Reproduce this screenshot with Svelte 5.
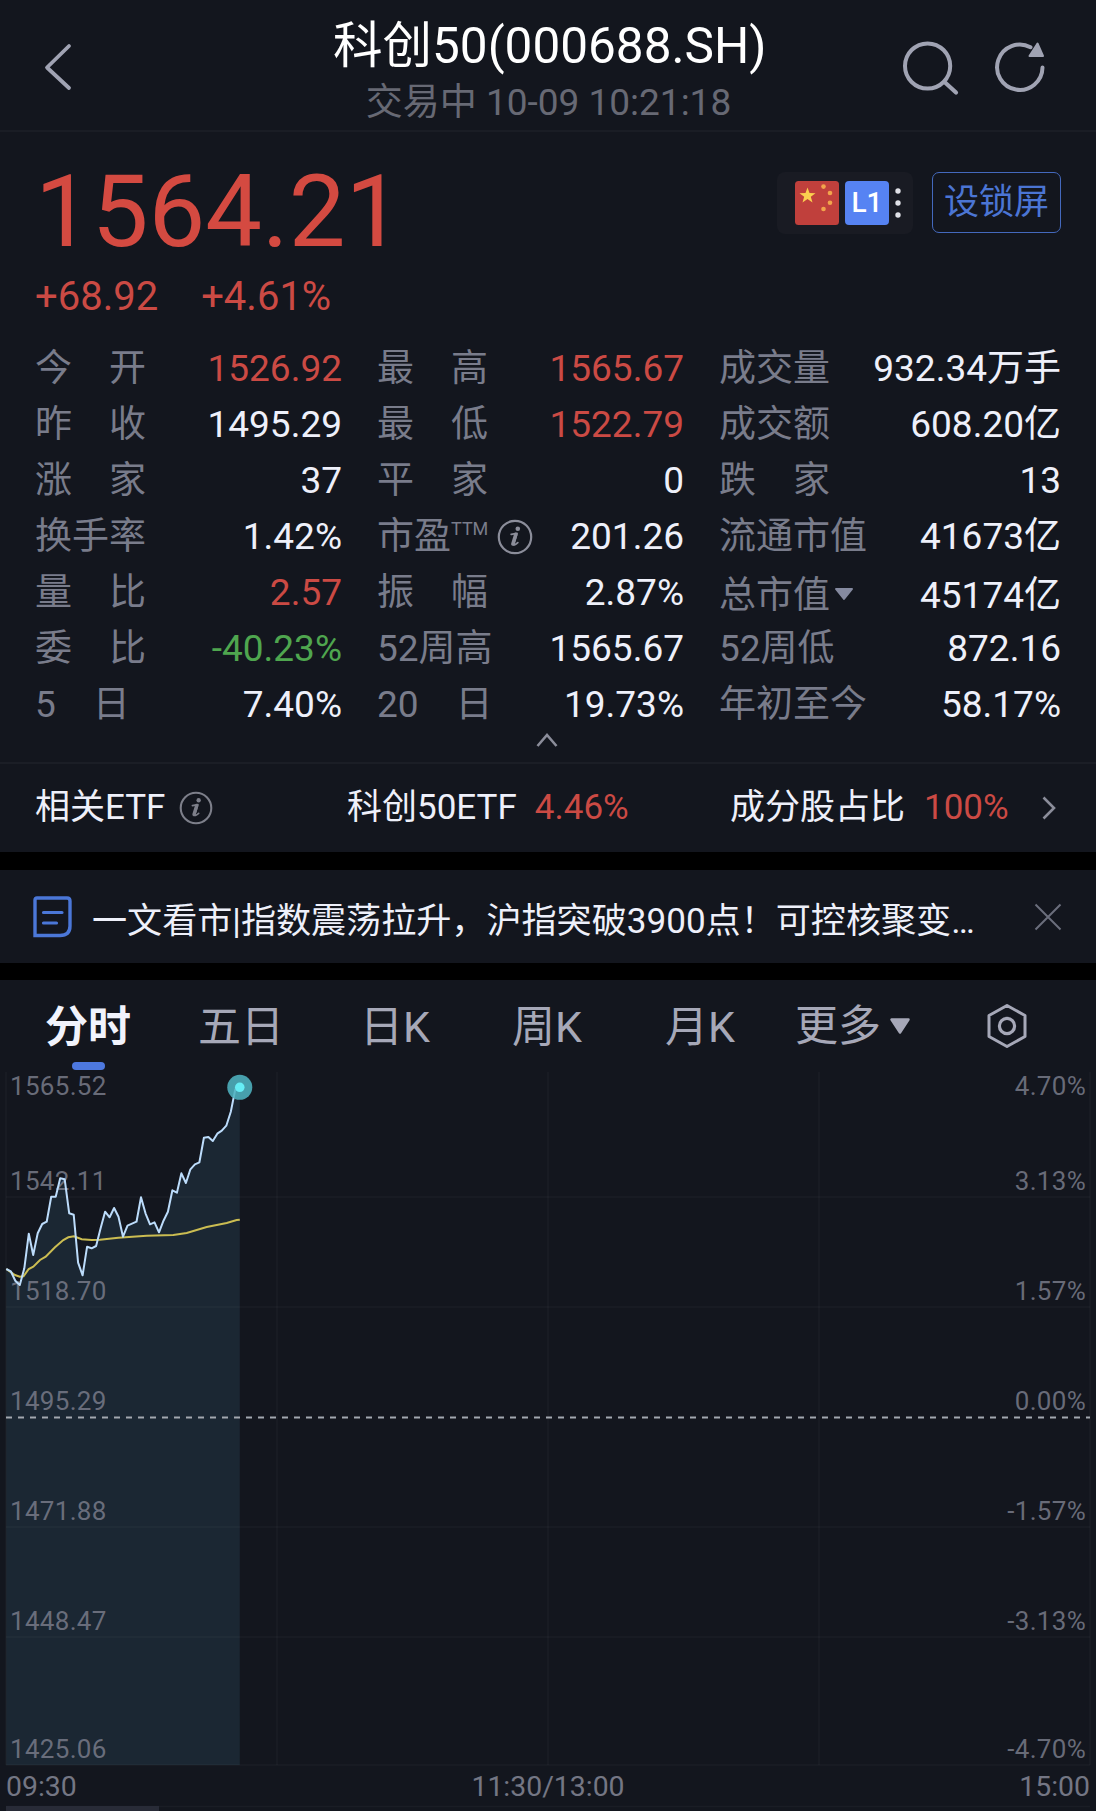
<script>
  // 行情指标，按行排列，每行三列
  const stats = [
    { label: '今　开', value: '1526.92', tone: 'up' },
    { label: '最　高', value: '1565.67', tone: 'up' },
    { label: '成交量', value: '932.34万手' },
    { label: '昨　收', value: '1495.29' },
    { label: '最　低', value: '1522.79', tone: 'up' },
    { label: '成交额', value: '608.20亿' },
    { label: '涨　家', value: '37' },
    { label: '平　家', value: '0' },
    { label: '跌　家', value: '13' },
    { label: '换手率', value: '1.42%' },
    { label: '市盈', value: '201.26', ttm: true },
    { label: '流通市值', value: '41673亿' },
    { label: '量　比', value: '2.57', tone: 'up' },
    { label: '振　幅', value: '2.87%' },
    { label: '总市值', value: '45174亿', dropdown: true },
    { label: '委　比', value: '-40.23%', tone: 'down' },
    { label: '52周高', value: '1565.67' },
    { label: '52周低', value: '872.16' },
    { label: '5　日', value: '7.40%' },
    { label: '20　日', value: '19.73%' },
    { label: '年初至今', value: '58.17%' }
  ];

  const tabs = ['分时', '五日', '日K', '周K', '月K'];
  let activeTab = '分时';

  // 坐标轴标签
  const axis = [
    { price: '1565.52', pct: '4.70%', y: 23 },
    { price: '1542.11', pct: '3.13%', y: 118 },
    { price: '1518.70', pct: '1.57%', y: 228 },
    { price: '1495.29', pct: '0.00%', y: 338 },
    { price: '1471.88', pct: '-1.57%', y: 448 },
    { price: '1448.47', pct: '-3.13%', y: 558 },
    { price: '1425.06', pct: '-4.70%', y: 686 }
  ];
  const gridX = [6, 277, 548, 819, 1090];
  const gridY = [125, 235, 455, 565, 693];

  // 每分钟一个点
  const minutes = [
    197, 199.3, 208.7, 213, 196.3, 161.7, 183, 161.3, 152, 149.7, 124.7, 124.7, 106.3,
    107.3, 141.3, 142.7, 190.7, 203.3, 174.7, 176.3, 174, 156.3, 139.7, 145.3, 136, 144.7,
    164.7, 153.7, 151.7, 149.7, 125.3, 141.3, 152.3, 150.3, 160.3, 148.7, 139.7, 118.3,
    120.7, 101.3, 111, 97.3, 92.3, 90.3, 65.7, 65, 69, 61.7, 58.7, 53.7, 39.7, 17.3, 15.3
  ];
  const startX = 6.3;
  const stepX = 4.49;
  const chartBottom = 693;

  const line = minutes.map((y, i) => `${(startX + i * stepX).toFixed(1)},${y}`).join(' ');
  const lastX = startX + (minutes.length - 1) * stepX;
  const lastY = minutes[minutes.length - 1];
  const area = `${startX},${chartBottom} ${line} ${lastX},${chartBottom}`;

  // 均价线
  const average =
    '6.3,197 15,203 19.7,204.7 23.5,204.3 28.7,197 33.3,194.7 40,188 45.7,184.7 55,175.3 ' +
    '63.3,168 68.3,165.3 74,164.3 81.7,167.3 91.7,168 100,167.7 118.3,165.7 146.7,163.7 ' +
    '173.3,163 186.7,161 206.7,155 226.7,151 236.7,148 239.8,147.7';
</script>

{#snippet info(size)}
  <svg class="info" width={size} height={size} viewBox="0 0 36 36">
    <circle cx="18" cy="18" r="16.2" fill="none" stroke="currentColor" stroke-width="2.2" />
    <circle cx="20.8" cy="9.8" r="2.3" fill="currentColor" />
    <path d="M14.2 15.4 L20 14.4 L16.6 25.4 Q17 26.8 20.8 23.6" fill="none" stroke="currentColor" stroke-width="1.8" stroke-linejoin="round" stroke-linecap="round" />
    <path d="M18.8 15.400 L15.900 25" stroke="currentColor" stroke-width="3.6" stroke-linecap="round" />
  </svg>
{/snippet}

<div class="page">
  <header class="header">
    <svg class="back" width="34" height="54" viewBox="0 0 34 54">
      <path d="M27 6 L5 27.5 L27 48" fill="none" stroke="currentColor" stroke-width="3.8" stroke-linecap="round" stroke-linejoin="round" />
    </svg>
    <div class="heading">
      <h1>科创50(000688.SH)</h1>
      <p>交易中 10-09 10:21:18</p>
    </div>
    <div class="actions">
      <svg width="60" height="60" viewBox="0 0 60 60">
        <circle cx="27.6" cy="28" r="22.6" fill="none" stroke="currentColor" stroke-width="4" />
        <path d="M44.5 44 L56 54.5" stroke="currentColor" stroke-width="4.2" stroke-linecap="round" />
      </svg>
      <svg width="60" height="60" viewBox="0 0 60 60">
        <path d="M52.5 29.5 A22.7 22.7 0 1 1 40.5 9.2" fill="none" stroke="currentColor" stroke-width="4" stroke-linecap="round" />
        <path d="M47.5 5.5 L53 18 L39.5 18 Z" fill="currentColor" stroke="currentColor" stroke-width="2" stroke-linejoin="round" />
      </svg>
    </div>
  </header>

  <section class="quote">
    <div class="quote-top">
      <div>
        <div class="price">1564.21</div>
        <div class="change">
          <span>+68.92</span>
          <span>+4.61%</span>
        </div>
      </div>
      <div class="badges">
        <div class="market">
          <svg width="44" height="44" viewBox="0 0 44 44">
            <rect width="44" height="44" rx="3.5" fill="#c0403c" />
            <path d="M12.5 6.5 L14.5 12 L20.5 12.2 L15.8 15.7 L17.5 21.5 L12.5 18.1 L7.5 21.5 L9.2 15.7 L4.500 12.2 L10.5 12 Z" fill="#fbd04f" />
            <circle cx="28.5" cy="5.6" r="2.3" fill="#f2a44c" />
            <circle cx="35" cy="12" r="2.3" fill="#f2a44c" />
            <circle cx="35" cy="21.7" r="2.3" fill="#f2a44c" />
            <circle cx="28.5" cy="28" r="2.3" fill="#f2a44c" />
          </svg>
          <span class="level">L1</span>
          <svg width="6" height="32" viewBox="0 0 6 32" fill="#dfe0e6">
            <circle cx="3" cy="4" r="2.7" />
            <circle cx="3" cy="16" r="2.7" />
            <circle cx="3" cy="28" r="2.7" />
          </svg>
        </div>
        <button class="lock">设锁屏</button>
      </div>
    </div>

    <div class="stats">
      {#each stats as item}
        <div class="stat" class:lower={item.dropdown}>
          <span class="label">
            {item.label}{#if item.ttm}<sup>TTM</sup>{@render info(36)}{/if}{#if item.dropdown}<svg class="caret" width="20" height="14" viewBox="0 0 20 14"><path d="M2 2 H18 L10 12 Z" fill="currentColor" stroke="currentColor" stroke-width="2" stroke-linejoin="round" /></svg>{/if}
          </span>
          <span class="value {item.tone ?? ''}">{item.value}</span>
        </div>
      {/each}
    </div>

    <div class="collapse">
      <svg width="24" height="16" viewBox="0 0 24 16">
        <path d="M2.5 14 L12 3 L21.5 14" fill="none" stroke="currentColor" stroke-width="2.6" />
      </svg>
    </div>
  </section>

  <section class="etf">
    <div class="etf-item related">
      <span>相关ETF</span>
      {@render info(34)}
    </div>
    <div class="etf-item fund">
      <span>科创50ETF</span>
      <span class="up">4.46%</span>
    </div>
    <div class="etf-item ratio">
      <span>成分股占比</span>
      <span class="up">100%</span>
    </div>
    <svg class="chevron" width="16" height="26" viewBox="0 0 16 26">
      <path d="M2.5 2.5 L13 13 L2.5 23.5" fill="none" stroke="currentColor" stroke-width="2.6" />
    </svg>
  </section>

  <section class="news">
    <svg width="40" height="42" viewBox="0 0 40 42" fill="none" stroke="#4b77d8">
      <path d="M4 2 H34 Q37 2 37 5 V30 Q37 39.5 27 39.5 H2 V4 Q2 2 4 2 Z" stroke-width="3.4" />
      <path d="M10.500 16.5 H29 M10.500 27 H23.5" stroke-width="3.2" stroke-linecap="round" />
    </svg>
    <span class="news-title">一文看市|指数震荡拉升，沪指突破3900点！可控核聚变…</span>
    <svg class="close" width="30" height="30" viewBox="0 0 30 30">
      <path d="M2.5 2.5 L27.5 27.5 M27.5 2.5 L2.5 27.5" stroke="currentColor" stroke-width="2" />
    </svg>
  </section>

  <section class="chart-section">
    <nav class="tabs">
      {#each tabs as tab}
        <button class="tab" class:active={tab === activeTab} on:click={() => (activeTab = tab)}>{tab}</button>
      {/each}
      <button class="tab more">
        更多
        <svg width="22" height="18" viewBox="0 0 22 18">
          <path d="M2.5 2.5 H19.5 L11 15.5 Z" fill="currentColor" stroke="currentColor" stroke-width="2.5" stroke-linejoin="round" />
        </svg>
      </button>
      <svg class="settings" width="42" height="46" viewBox="0 0 42 46" fill="none" stroke="currentColor">
        <path d="M21 2.5 L39 12.5 V33.5 L21 43.5 L3 33.5 V12.5 Z" stroke-width="3" stroke-linejoin="round" />
        <circle cx="21" cy="23" r="7.6" stroke-width="3.2" />
      </svg>
    </nav>

    <svg class="chart" width="1096" height="739" viewBox="0 0 1096 739">
      <polygon points={area} fill="#1b2733" />
      {#each gridX as x}
        <line x1={x} x2={x} y1="0" y2={chartBottom} class="grid" />
      {/each}
      {#each gridY as y}
        <line x1="6" x2="1090" y1={y} y2={y} class="grid" />
      {/each}
      <line x1="6" x2="1090" y1="345.5" y2="345.5" class="zero" />

      {#each axis as row}
        <text x="10" y={row.y} class="axis">{row.price}</text>
        <text x="1086" y={row.y} class="axis" text-anchor="end">{row.pct}</text>
      {/each}

      <polyline points={average} fill="none" stroke="#cbbd52" stroke-width="2" />
      <polyline points={line} fill="none" stroke="#bcdcfb" stroke-width="2" stroke-linejoin="round" />
      <circle cx={lastX} cy={lastY} r="12.5" fill="#4fb3c0" fill-opacity="0.88" />
      <circle cx={lastX} cy={lastY} r="4.8" fill="#66edf5" />

      <text x="6" y="724" class="time">09:30</text>
      <text x="548" y="724" class="time" text-anchor="middle">11:30/13:00</text>
      <text x="1090" y="724" class="time" text-anchor="end">15:00</text>

      <line x1="6" x2="1090" y1="734.5" y2="734.5" class="grid" />
      <rect x="6" y="734" width="153" height="5" fill="#282b37" />
    </svg>
  </section>
</div>

<style>
  :global(body) {
    background: #000;
  }

  .page {
    width: 1096px;
    height: 1811px;
    overflow: hidden;
    display: flex;
    flex-direction: column;
    font-family: Roboto, "Noto Sans CJK SC", sans-serif;
    color: #eef0fa;
  }

  svg {
    display: block;
    flex: none;
  }

  button {
    background: none;
    border: none;
    padding: 0;
    font-family: inherit;
    cursor: pointer;
  }

  .up {
    color: #cb4a44;
  }

  .down {
    color: #4fa64f;
  }

  .header {
    box-sizing: border-box;
    height: 132px;
    padding: 0 46px 0 42px;
    display: grid;
    grid-template-columns: 1fr 436px 1fr;
    background: #13161e;
    border-bottom: 2px solid #1a1d25;
    color: #a0a3b3;
  }

  .back {
    margin-top: 40px;
  }

  .heading {
    padding: 18px 0 0 5px;
    text-align: center;
    white-space: nowrap;
  }

  .heading h1 {
    margin: 0;
    font-size: 49.5px;
    line-height: 56px;
    font-weight: 400;
    color: #fff;
  }

  .heading p {
    margin: 9px 0 0;
    font-size: 37px;
    line-height: 40px;
    color: #676974;
  }

  .actions {
    display: flex;
    justify-content: flex-end;
    gap: 30px;
    margin-top: 38px;
  }

  .quote {
    box-sizing: border-box;
    height: 630px;
    padding: 29px 35px 0;
    background: #13161e;
  }

  .quote-top {
    display: flex;
    justify-content: space-between;
    align-items: flex-start;
  }

  .price {
    font-size: 101px;
    line-height: 102px;
    color: #d44a41;
  }

  .change {
    display: flex;
    gap: 43px;
    margin-top: 9px;
    font-size: 40px;
    line-height: 49px;
    color: #cb4a44;
  }

  .badges {
    display: flex;
    gap: 19px;
    margin-top: 11px;
  }

  .market {
    box-sizing: border-box;
    width: 136px;
    height: 62px;
    padding-left: 18px;
    display: flex;
    align-items: center;
    gap: 6px;
    border-radius: 8px;
    background: #191b23;
  }

  .level {
    width: 44px;
    line-height: 44px;
    border-radius: 4px;
    background: #5683f3;
    color: #fff;
    font-size: 28px;
    font-weight: 500;
    text-align: center;
  }

  .lock {
    width: 129px;
    height: 61px;
    border: 1.5px solid #4469bd;
    border-radius: 7px;
    color: #4b75d4;
    font-size: 35px;
    line-height: 58px;
  }

  .stats {
    display: grid;
    grid-template-columns: 307px 307px 342px;
    grid-auto-rows: 56px;
    column-gap: 35px;
    margin-top: 20px;
    font-size: 37px;
    line-height: 56px;
  }

  .stat {
    display: flex;
    justify-content: space-between;
    white-space: nowrap;
  }

  .stat.lower {
    padding-top: 3px;
  }

  .label {
    display: flex;
    color: #797c8b;
  }

  .label sup {
    font-size: 18px;
    line-height: 40px;
  }

  .label .info {
    margin: 10px 0 0 9px;
    color: #8b8d9a;
  }

  .caret {
    margin: 19px 0 0 4px;
    color: #858aa0;
  }

  .collapse {
    display: flex;
    justify-content: center;
    margin-top: -1px;
    padding-right: 2px;
    color: #8b8d9a;
  }

  .etf {
    box-sizing: border-box;
    height: 90px;
    padding: 0 39px 0 35px;
    display: flex;
    align-items: center;
    background: #13161e;
    border-top: 2px solid #1b1e26;
    font-size: 35px;
    line-height: 50px;
    white-space: nowrap;
  }

  .etf-item {
    display: flex;
    align-items: center;
  }

  .related {
    width: 312px;
    gap: 14px;
    flex: none;
  }

  .related .info {
    color: #7d7f8a;
  }

  .fund {
    width: 383px;
    gap: 18px;
    flex: none;
  }

  .ratio {
    gap: 19px;
  }

  .chevron {
    margin-left: auto;
    color: #8b8d9a;
  }

  .news {
    height: 93px;
    margin-top: 18px;
    padding: 0 33px;
    display: flex;
    align-items: center;
    background: #13161e;
  }

  .news-title {
    padding: 8px 0 0 19px;
    font-size: 35.1px;
    line-height: 50px;
    white-space: nowrap;
  }

  .close {
    margin-left: auto;
    color: #6b6e7c;
  }

  .chart-section {
    margin-top: 17px;
    background: #13161e;
  }

  .tabs {
    height: 92px;
    padding: 0 68px 0 45px;
    display: grid;
    grid-template-columns: 153px 162px 152px 153px 130px 191px 1fr;
    align-items: center;
    color: #a6a8b8;
  }

  .tab {
    height: 92px;
    font-size: 43px;
    line-height: 94px;
    color: #a6a8b8;
    text-align: left;
    white-space: nowrap;
  }

  .tab.active {
    position: relative;
    width: 86px;
    font-weight: 700;
    color: #f1f3fc;
  }

  .tab.active::after {
    content: '';
    position: absolute;
    left: 27px;
    bottom: 2px;
    width: 33px;
    height: 8px;
    border-radius: 4px;
    background: #4d78df;
  }

  .more {
    display: flex;
    align-items: center;
    gap: 8px;
  }

  .grid {
    stroke: #fff;
    stroke-opacity: 0.032;
    stroke-width: 1.5;
  }

  .zero {
    stroke: #a3a8b0;
    stroke-width: 2;
    stroke-dasharray: 6 6;
  }

  .axis {
    font-size: 26px;
    letter-spacing: 0.3px;
    fill: #787b89;
    fill-opacity: 0.85;
  }

  .time {
    font-size: 28.4px;
    fill: #747684;
  }
</style>
